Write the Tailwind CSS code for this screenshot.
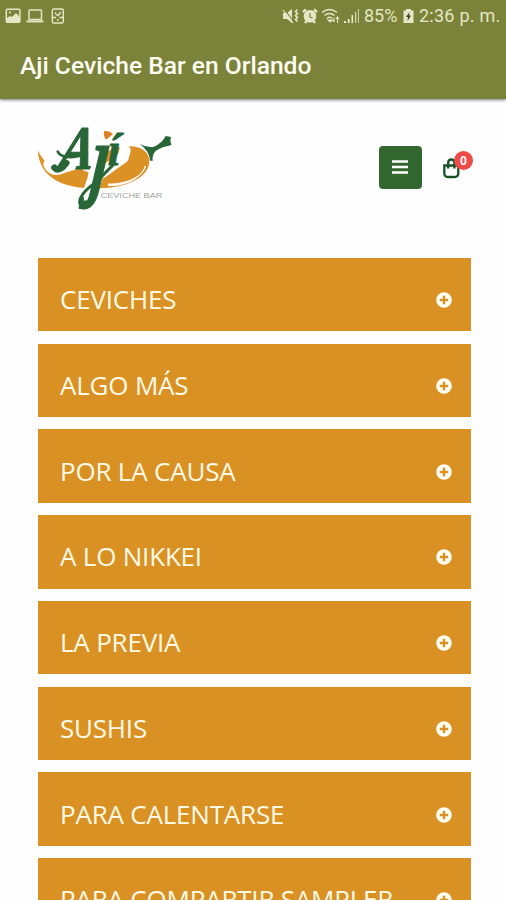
<!DOCTYPE html>
<html lang="es">
<head>
    <meta charset="UTF-8">
    <meta name="viewport" content="width=device-width, initial-scale=1.0">
    <script src="https://cdn.jsdelivr.net/npm/@tailwindcss/browser@4"></script>
    <title>Aji Ceviche Bar en Orlando</title>
</head>
<body class="h-[900px] overflow-hidden bg-[#fefefe] font-['Open_Sans',sans-serif]">
    <header class="h-[99px] bg-[#7b833a] font-[Roboto,sans-serif] shadow-[0_1px_3px_#77747a]">
        <!-- status bar -->
        <div class="flex h-8 items-center justify-between pl-[5px] pr-[6px] text-[#e4e6c5]">
            <div class="flex items-center gap-[5px]">
                <svg class="h-4 w-4" viewBox="0 0 16 16" fill="none" stroke="currentColor" stroke-width="1.5">
                    <rect x="1.3" y="1.3" width="13.6" height="13" rx="1"/>
                    <path d="M2 10l3-2 2 1 4-4 4 4v5H2z" fill="currentColor" stroke="none"/>
                    <circle cx="5" cy="4.5" r="1" fill="currentColor" stroke="none"/>
                </svg>
                <svg class="h-4 w-[18px]" viewBox="0 0 18 16" fill="none" stroke="currentColor" stroke-width="1.5">
                    <rect x="3" y="2" width="12.5" height="9.5" rx=".8"/>
                    <path d="M.5 13.4h17" stroke-width="2"/>
                </svg>
                <svg class="ml-[2px] h-4 w-[14px]" viewBox="0 0 14 16" fill="none" stroke="currentColor" stroke-width="1.4">
                    <rect x="1.3" y="1" width="11" height="14" rx="1.5"/>
                    <path d="M4 4.5l1 1M10 4l-3 3.5L4.5 6M1.5 9.5H5M8.5 9.5H12M6.8 11v2"/>
                </svg>
            </div>
            <div class="flex items-center text-[18px]">
                <svg class="h-4 w-[17px]" viewBox="0 0 17 16" fill="none" stroke="currentColor" stroke-width="1.6">
                    <path d="M1 5h4l5-4v14l-5-4H1z" fill="currentColor" stroke="none"/>
                    <path d="M2 1l10 13" stroke="#7b833a" stroke-width="1.2"/>
                    <path d="M1 2l10 13" stroke-width="1.2"/>
                    <path d="M15.5 1.5l-2 2 2 2-2 2 2 2-2 2 2 2"/>
                </svg>
                <svg class="ml-[3px] h-4 w-4" viewBox="0 0 16 16" fill="none" stroke="currentColor">
                    <circle cx="8" cy="8.3" r="6.3" fill="currentColor" stroke="none"/>
                    <path d="M1 4l3-2.5M15 4l-3-2.5M3 15l1.5-2M13 15l-1.5-2" stroke-width="2.4"/>
                    <path d="M8 5v4l2.5 1" stroke="#7b833a" stroke-width="1.2"/>
                </svg>
                <svg class="ml-[3px] h-4 w-5" viewBox="0 0 20 16" fill="none" stroke="currentColor" stroke-width="1.5">
                    <path d="M1 4.5Q8.5-1.5 16 4.5M3.5 7.5Q8.5 3.5 13.5 7.5M6 10.3Q8.5 8.3 11 10.3"/>
                    <path d="M7 12h4l-2 2zM13 14V9.5M11.5 12l1.5 2M16.5 15V9.5M15 11l1.5-2 1.5 2" fill="currentColor" stroke-width="1.1"/>
                </svg>
                <svg class="ml-[2px] h-4 w-[17px]" viewBox="0 0 17 16" fill="currentColor">
                    <path d="M1 13h2v2H1zM4.8 11h1.8v4H4.8zM8.5 7h1.6v8H8.5z"/>
                    <path d="M12 4h1.4v11H12zM15 1h1v14h-1z" opacity=".75"/>
                </svg>
                <span class="-mt-px ml-[4px] w-[36px] whitespace-nowrap text-[18px]">85%</span>
                <svg class="ml-[3px] h-4 w-[11px]" viewBox="0 0 11 16" fill="currentColor">
                    <path d="M3 1h5v1.5h2.5V15H.5V2.500H3z"/>
                    <path d="M6.5 4L3 9h2l-.5 4L8 7.500H6z" fill="#3d421e"/>
                </svg>
                <span class="-mt-px ml-[5px] w-[81px] whitespace-nowrap text-[18px] tracking-[0.25px]">2:36 p. m.</span>
            </div>
        </div>
        <h1 class="whitespace-nowrap pl-5 pt-[17px] text-[24.6px] font-medium leading-[34px] text-[#fdfdf3]">Aji Ceviche Bar en Orlando</h1>
    </header>

    <nav class="flex h-[159px] items-start pl-[25px] pt-4">
        <svg class="h-[105px] w-[160px]" viewBox="0 0 480 315">
            <!-- chili pepper -->
            <path d="M38 106C58 145 83 166 120 165C190 163 235 94 312 94C350 93 375 113 373 142C370 188 305 219 223 220C145 223 45 207 38 106Z" fill="#dc9125"/>
            <path d="M250 211C300 215 349 190 361 153C357 181 309 208 250 207Z" fill="#fff" stroke="#fff" stroke-width="3"/>
            <path d="M345 87Q365 99 387 95Q412 84 422 63L438 66Q434 80 440 89L430 93Q412 94 392 108Q381 119 383 137L375 137Q375 111 345 87Z" fill="#286637"/>
            <!-- white gap between pepper and wordmark -->
            <g fill="none" stroke="#fefefe" stroke-linecap="round" stroke-linejoin="round">
                <path d="M72 148Q84 172 112 158L172 140" stroke-width="34"/>
                <path d="M188 148L220 120L210 190L196 232" stroke-width="44"/>
                <path d="M232 172L268 146L294 128L300 106" stroke-width="34"/>
            </g>
            <g fill="none" stroke="#286637" stroke-linecap="round">
                <path d="M124 144Q100 174 88 158" stroke-width="19"/>
                <path d="M98 110Q112 138 186 118" stroke-width="8"/>
                <path d="M182 260Q158 281 166 250Q178 224 212 203L264 150" stroke-width="9"/>
            </g>
            <g font-family="'Liberation Serif', serif" font-style="italic" font-weight="700" fill="#286637" stroke="#286637" stroke-width="3" stroke-linejoin="round">
                <text transform="translate(97 162) skewX(-10)" font-size="186" textLength="105" lengthAdjust="spacingAndGlyphs">A</text>
                <text transform="translate(193 222) skewX(-7) scale(1 1.55)" font-size="180">ȷ</text>
                <text x="248" y="151" font-size="138">í</text>
            </g>
            <path d="M237 49Q251 45 264 57L243 74Q235 65 237 49Z" fill="#dc8125"/>
            <text x="227" y="249" font-family="'Liberation Sans', sans-serif" font-size="23" fill="#a0a4a0" textLength="185" lengthAdjust="spacingAndGlyphs">CEVICHE BAR</text>
        </svg>
        <button class="ml-[194px] mt-[31px] flex h-[43px] w-[43px] items-center justify-center rounded-[4px] bg-[#32682f]" aria-label="Menú">
            <svg class="-mt-px mr-px h-4 w-4" viewBox="0 0 16 16" stroke="#fff" stroke-width="2.4"><path d="M0 2.5h16M0 8h16M0 13.5h16"/></svg>
        </button>
        <a href="#" class="relative ml-[20px] mt-[43px] h-[21px] w-[19px]" aria-label="Carrito">
            <svg class="h-[21px] w-[19px]" viewBox="0 0 19 21" fill="none" stroke="#195126" stroke-width="2.3">
                <path d="M2.3 7.5h14v7.5Q16.3 19 12.5 19H6Q2.3 19 2.3 15zM6.2 10.5V5Q6.2 1.500 9.3 1.500T12.4 5v5.5"/>
            </svg>
            <span class="absolute left-[12px] top-[-7px] flex h-[19px] w-[19px] items-center justify-center rounded-full bg-[#ec4b49] font-[Roboto] text-[12px] font-bold text-white">0</span>
        </a>
    </nav>

    <main id="menu" class="flex flex-col gap-[12.35px] pl-[38px] pr-[35px]"></main>

    <script>
        const menu = document.getElementById('menu')
        const categories = ['CEVICHES', 'ALGO MÁS', 'POR LA CAUSA', 'A LO NIKKEI', 'LA PREVIA', 'SUSHIS', 'PARA CALENTARSE', 'PARA COMPARTIR SAMPLER']

        categories.forEach((name) => {
            menu.innerHTML += `
            <button class="flex h-[73.4px] shrink-0 items-center justify-between bg-[#d99124] pl-[22px] pr-[19.5px] pt-[11px] text-[26px] text-[#fffae6]">
                <span class="-mt-px whitespace-nowrap tracking-[-0.2px]">${name}</span>
                <svg class="h-4 w-4" viewBox="0 0 16 16">
                    <circle cx="8" cy="8" r="7.8" fill="#fffdf2"/>
                    <path d="M8 3.8v8.4M3.8 8h8.4" stroke="#d99124" stroke-width="2.3"/>
                </svg>
            </button>`
        })
    </script>
</body>
</html>
